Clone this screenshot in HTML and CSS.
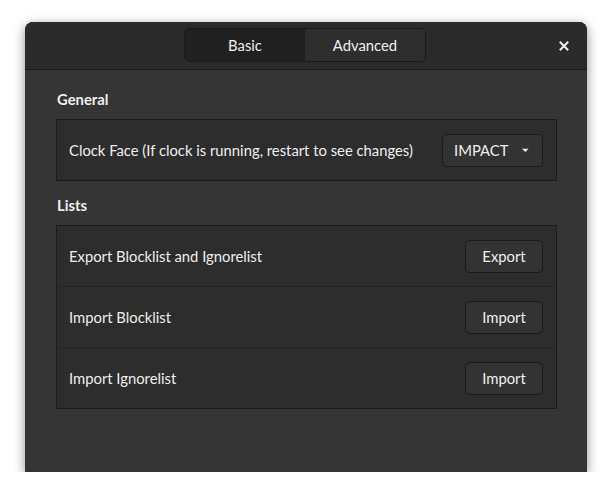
FILE: index.html
```html
<!DOCTYPE html>
<html>
<head>
<meta charset="utf-8">
<link rel="stylesheet" href="styles.css">
</head>
<body>
<div class="window">
  <div class="header">
    <div class="tabs">
      <div class="tab active">Basic</div>
      <div class="tab">Advanced</div>
    </div>
    <div class="close">
      <svg width="10" height="10" viewBox="0 0 10 10"><path d="M1.5 1.5 L8.5 8.5 M8.5 1.5 L1.5 8.5" stroke="#eeeeec" stroke-width="2" stroke-linecap="square"/></svg>
    </div>
  </div>
  <div class="content">
    <div class="section-title">General</div>
    <div class="frame">
      <div class="row">
        <span>Clock Face (If clock is running, restart to see changes)</span>
        <div class="btn combo">IMPACT
          <svg width="9" height="5" viewBox="0 0 9 5"><path d="M0 0 L9 0 L4.5 4.5 Z" fill="#eeeeec"/></svg>
        </div>
      </div>
    </div>
    <div class="section-title">Lists</div>
    <div class="frame">
      <div class="row">
        <span>Export Blocklist and Ignorelist</span>
        <div class="btn">Export</div>
      </div>
      <div class="row">
        <span>Import Blocklist</span>
        <div class="btn">Import</div>
      </div>
      <div class="row">
        <span>Import Ignorelist</span>
        <div class="btn">Import</div>
      </div>
    </div>
  </div>
</div>
</body>
</html>
```
FILE: styles.css
```css
* { box-sizing: border-box; }
html, body { margin: 0; padding: 0; background: #ffffff; }
body {
  font-family: "Lato", "Noto Sans", sans-serif;
  font-size: 14.8px;
  color: #eeeeec;
  white-space: nowrap;
}
.window {
  margin: 22px 0 0 25px;
  width: 562px;
  height: 450px;
  background: #353535;
  border-radius: 8px 8px 0 0;
  box-shadow: 0 3px 12px rgba(0,0,0,0.45);
  display: flex;
  flex-direction: column;
}
.header {
  height: 48px;
  background: #2b2b2b;
  border-bottom: 1px solid #1b1b1b;
  border-radius: 8px 8px 0 0;
  display: flex;
  align-items: center;
  justify-content: center;
  position: relative;
}
.tabs {
  display: flex;
  width: 242px;
  height: 34px;
  border: 1px solid #1b1b1b;
  border-radius: 5px;
  overflow: hidden;
  margin-right: 2px;
  margin-top: -1px;
}
.tab {
  flex: 1;
  display: flex;
  align-items: center;
  justify-content: center;
  background: #2e2e2e;
  color: #eeeeec;
}
.tab.active { background: #202020; }
.close {
  position: absolute;
  right: 18px;
  top: 19px;
  width: 10px;
  height: 10px;
  display: flex;
}
.content {
  padding: 19px 30px 0 31px;
  display: flex;
  flex-direction: column;
}
.section-title {
  font-weight: bold;
  line-height: 20px;
  margin-bottom: 10px;
  padding-left: 1px;
}
.frame {
  border: 1px solid #1c1c1c;
  background: #2d2d2d;
  margin-bottom: 14px;
}
.row {
  height: 61px;
  display: flex;
  align-items: center;
  justify-content: space-between;
  padding: 0 13px 0 12px;
  border-top: 1px solid #252525;
}
.row:first-child { border-top: none; height: 60px; }
.btn {
  height: 33px;
  min-width: 78px;
  padding: 0 14px;
  display: flex;
  align-items: center;
  justify-content: center;
  gap: 14px;
  background: #333333;
  border: 1px solid #1b1b1b;
  border-radius: 5px;
  color: #eeeeec;
}
.combo { width: 101px; padding: 0 13px 0 11px; justify-content: space-between; }
```
